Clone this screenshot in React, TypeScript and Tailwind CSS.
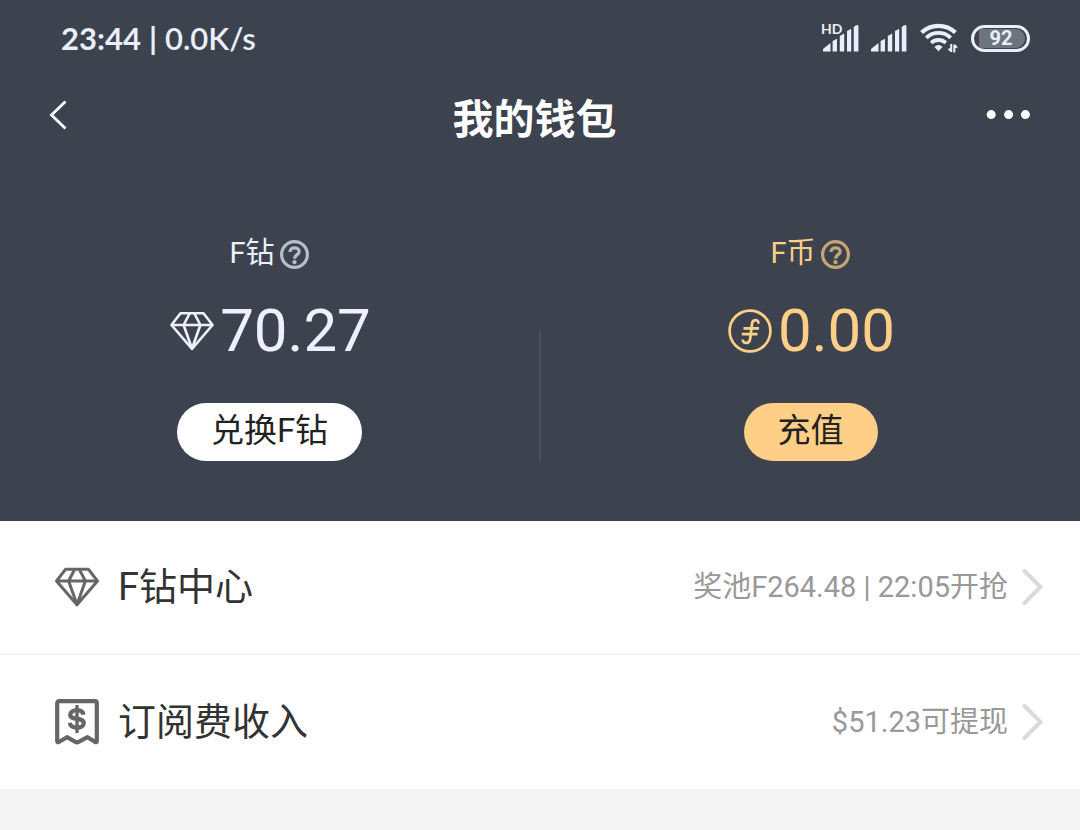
import React from 'react';
import clsx from 'clsx';

interface IconProps {
  className?: string;
}

function SignalIcon() {
  return (
    <svg width="36" height="27" viewBox="0 0 36 27" fill="currentColor" aria-hidden="true">
      <path d="M0 26.5V24L7.5 18V26.5Z" />
      <path d="M9.6 26.5V16L14 13.8V26.5Z" />
      <path d="M16.8 26.5V11L21.2 8.5V26.5Z" />
      <path d="M24 26.5V6L28.2 3.8V26.5Z" />
      <path d="M30.8 26.5V2L33 .2H35.4V26.5Z" />
    </svg>
  );
}

function WifiIcon() {
  return (
    <svg width="38" height="30" viewBox="0 0 38 30" fill="none" stroke="currentColor" aria-hidden="true">
      <path d="M1.6 9.6A24.5 24.5 0 0 1 35.4 9.6" strokeWidth="4.2" />
      <path d="M6.3 14.8A17.6 17.6 0 0 1 30.7 14.8" strokeWidth="3.8" />
      <path d="M11.2 19.9A10.6 10.6 0 0 1 25.8 19.9" strokeWidth="3.8" />
      <path d="M14.4 24Q18.5 19.8 22.6 24L18.5 28.2Z" fill="currentColor" stroke="none" />
      <path d="M31.2 21V29M28.6 25.6L31.2 28.4M34.3 29.5V21.5M36.9 24.8L34.3 22" strokeWidth="2" />
    </svg>
  );
}

function DiamondIcon({ className }: IconProps) {
  return (
    <svg
      width="44"
      height="40"
      viewBox="0 0 44 40"
      fill="none"
      stroke="currentColor"
      strokeLinejoin="round"
      className={className}
      aria-hidden="true"
    >
      <path d="M10.5 2.3H33.5L42.5 14L22 37.8L1.5 14Z" />
      <path d="M1.5 14H42.5M19.6 2.5L13.6 14L22 37.5L30.4 14L24.4 2.5" />
    </svg>
  );
}

function CoinIcon() {
  return (
    <svg width="44" height="44" viewBox="0 0 44 44" fill="none" stroke="currentColor" strokeWidth="2.7" aria-hidden="true">
      <circle cx="22" cy="22" r="20.4" />
      <path d="M30.5 14.6C30.6 9.8 24.4 9.8 24 15L22.2 29.5C21.6 35.2 14.8 35.4 14.8 30.4" />
      <path d="M15.5 19.3H31M13.8 25.2H29.5" />
    </svg>
  );
}

function ReceiptIcon() {
  return (
    <svg
      width="44"
      height="46"
      viewBox="0 0 44 46"
      fill="none"
      stroke="currentColor"
      strokeWidth="4.2"
      strokeLinejoin="round"
      aria-hidden="true"
    >
      <path d="M2.2 4.2Q2.2 2.2 4.2 2.2H39.8Q41.8 2.2 41.8 4.2V42.2Q41.8 43.8 40.2 43L32.5 38.2L23.6 42.8Q22 43.8 20.4 42.8L12 38.2L3.8 43Q2.2 43.8 2.2 42.2Z" />
      <path d="M28.3 15.8C28 12.4 25 11.2 22 11.2C18 11.2 15.2 13 15.2 15.8C15.2 22 28.8 17.6 28.8 24C28.8 27 25.8 28.6 22 28.6C18.2 28.6 15.2 27.2 14.8 23.8" />
      <path d="M22 6V34" strokeWidth="3.4" />
    </svg>
  );
}

function HelpIcon() {
  return (
    <svg width="30" height="30" viewBox="0 0 30 30" fill="none" stroke="currentColor" strokeWidth="3.2" aria-hidden="true">
      <circle cx="14.5" cy="14.5" r="12.9" />
      <path d="M10 12C10 6.4 19.2 6.6 19.2 11.6C19.2 14.8 14.5 14.6 14.5 18.8" />
      <circle cx="14.5" cy="22.2" r="2.1" fill="currentColor" stroke="none" />
    </svg>
  );
}

function StatusBar() {
  return (
    <div className="flex h-[76px] items-center justify-between pl-[61px] pr-[50px] text-[#e9eefa]">
      <div className="flex gap-2 font-['Lato',sans-serif] text-[31px] leading-none">
        <span className="font-bold">23:44</span>
        <span className="font-bold">|</span>
        <span className="font-semibold">0.0K/s</span>
      </div>
      <div className="flex items-center">
        <div className="relative mr-3">
          <SignalIcon />
          <span className="absolute -left-0.5 -top-1 font-['Lato',sans-serif] text-[14px] font-bold leading-4">HD</span>
        </div>
        <SignalIcon />
        <div className="ml-[13px] mr-[13px]">
          <WifiIcon />
        </div>
        <div className="flex h-[27px] w-[59px] rounded-full border-[3px] border-current py-px pl-[5px] pr-0.5">
          <span className="flex flex-1 items-center justify-center rounded-r-full bg-[#6d747d] pr-0.5 text-[20px] font-bold leading-none">
            92
          </span>
        </div>
      </div>
    </div>
  );
}

interface BalanceProps {
  label: string;
  helpLabel: string;
  amount: string;
  action: string;
  icon: React.ReactNode;
  gold?: boolean;
}

function Balance({ label, helpLabel, amount, action, icon, gold }: BalanceProps) {
  return (
    <div className={clsx('flex flex-1 flex-col items-center', gold ? 'text-[#ffce87]' : 'text-[#edf1ff]')}>
      <div className="flex h-8 items-center gap-[5px]">
        <span className="text-[29px] leading-8">{label}</span>
        <button type="button" aria-label={helpLabel} className="mt-1 opacity-70">
          <HelpIcon />
        </button>
      </div>
      <div className="mt-[30px] flex h-16 items-center gap-1.5 pl-0.5">
        {icon}
        <span className="text-[60px] leading-none">{amount}</span>
      </div>
      <button
        type="button"
        className={clsx(
          'mt-10 h-[58px] rounded-full px-[34px] pb-1 text-[33px] leading-none text-[#222]',
          gold ? 'bg-[#ffce87]' : 'bg-white'
        )}
      >
        {action}
      </button>
    </div>
  );
}

interface WalletRowProps {
  title: string;
  detail: string;
  icon: React.ReactNode;
}

function WalletRow({ title, detail, icon }: WalletRowProps) {
  return (
    <a href="#" className="flex h-[134px] items-center bg-white pl-[55px] pr-9 text-[#333]">
      <span className="w-11 text-[#666]">{icon}</span>
      <span className="ml-[19px] text-[38px] leading-none">{title}</span>
      <span className="ml-auto text-[29px] leading-none text-[#999]">{detail}</span>
      <svg
        width="22"
        height="36"
        viewBox="0 0 22 36"
        fill="none"
        stroke="currentColor"
        strokeWidth="4"
        className="ml-[14px] text-[#dadada]"
        aria-hidden="true"
      >
        <path d="M2.5 2L18.5 18L2.5 34" strokeLinecap="round" strokeLinejoin="miter" />
      </svg>
    </a>
  );
}

export default function App() {
  return (
    <div className="min-h-screen bg-[#f4f4f4] font-['Roboto','Noto_Sans_CJK_SC',sans-serif]" lang="zh-CN">
      <header className="bg-[#3c434f] pb-[60px]">
        <StatusBar />

        <nav className="flex h-[78px] items-center justify-between pl-[49px] pr-[50px] text-white">
          <button type="button" aria-label="返回" className="flex w-[34px]">
            <svg width="18" height="30" viewBox="0 0 18 30" fill="none" stroke="currentColor" strokeWidth="2.8">
              <path d="M16.5 1.5L2.5 15L16.5 28.5" />
            </svg>
          </button>
          <h1 className="pt-2.5 text-[41px] font-bold leading-none">我的钱包</h1>
          <button type="button" aria-label="更多">
            <svg width="44" height="10" viewBox="0 0 44 10" fill="currentColor">
              <circle cx="5.2" cy="4.6" r="4.5" />
              <circle cx="22.6" cy="4.6" r="4.5" />
              <circle cx="39.4" cy="4.6" r="4.5" />
            </svg>
          </button>
        </nav>

        <div className="flex items-end pt-[83px]">
          <Balance
            label="F钻"
            helpLabel="F钻说明"
            amount="70.27"
            action="兑换F钻"
            icon={<DiamondIcon className="stroke-[2.6]" />}
          />
          <div className="h-[130px] w-0.5 bg-[#4a515d]" />
          <Balance label="F币" helpLabel="F币说明" amount="0.00" action="充值" icon={<CoinIcon />} gold />
        </div>
      </header>

      <main className="divide-y-2 divide-[#f4f4f4]">
        <WalletRow title="F钻中心" detail="奖池F264.48 | 22:05开抢" icon={<DiamondIcon className="stroke-3" />} />
        <WalletRow title="订阅费收入" detail="$51.23可提现" icon={<ReceiptIcon />} />
      </main>
    </div>
  );
}
